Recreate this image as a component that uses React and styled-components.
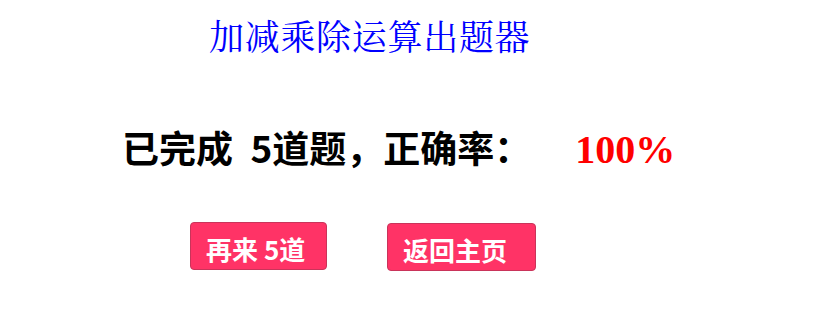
import React from 'react';
import styled, { createGlobalStyle } from 'styled-components';

const GlobalStyle = createGlobalStyle`
  body {
    margin: 0;
    background: #fff;
    font-family: "Noto Sans CJK SC", "Noto Sans", sans-serif;
  }
`;

const Page = styled.div`
  width: 827px;
  height: 319px;
  display: flex;
  flex-direction: column;
`;

const Title = styled.h1`
  margin: 14px 0 0;
  padding-left: 209px;
  font-family: "Noto Serif CJK SC", "AR PL UMing CN", "Liberation Serif", "Noto Sans CJK SC", serif;
  font-weight: 400;
  font-size: 35px;
  letter-spacing: 0.7px;
  line-height: 42px;
  color: #0000ff;
`;

const Result = styled.div`
  margin-top: 64px;
  padding-left: 122px;
  display: flex;
  align-items: baseline;
  height: 50px;
`;

const Summary = styled.span`
  font-size: 37px;
  font-weight: 700;
  word-spacing: 9px;
  color: #000;
`;

const Rate = styled.span`
  margin-left: ${(p) => p.gap}px;
  font-family: "Liberation Serif", serif;
  font-size: 40px;
  font-weight: 700;
  color: #ff0000;
`;

const Actions = styled.div`
  margin-top: 52px;
  padding-left: 190px;
  display: flex;
  align-items: flex-start;
  gap: 60px;
`;

const Button = styled.button`
  width: ${(p) => p.w}px;
  height: 48px;
  margin-top: ${(p) => p.drop || 0}px;
  padding: 4px 0 0 15px;
  text-align: left;
  border: 1px solid #c9345a;
  border-radius: 4px;
  background: #ff3366;
  color: #fff;
  font-family: "Noto Sans CJK SC", sans-serif;
  font-size: 26px;
  font-weight: 700;
  cursor: pointer;
`;

export default function App() {
  return (
    <>
      <GlobalStyle />
      <Page>
        <Title>加减乘除运算出题器</Title>
        <Result>
          <Summary>已完成 5道题，正确率：</Summary>
          <Rate gap={44}>100%</Rate>
        </Result>
        <Actions>
          <Button w={137}>再来 5道</Button>
          <Button w={149} drop={1}>返回主页</Button>
        </Actions>
      </Page>
    </>
  );
}
